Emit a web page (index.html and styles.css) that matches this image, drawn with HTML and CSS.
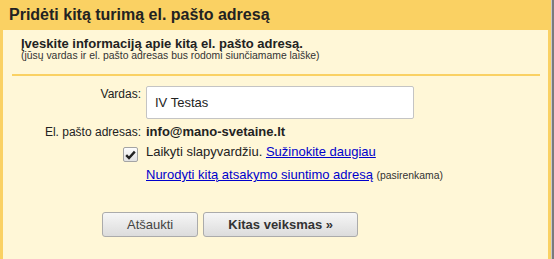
FILE: index.html
```html
<!DOCTYPE html>
<html>

	<head>

		<meta charset="UTF-8">
		<link rel="stylesheet" href="styles.css">
		<title>Pridėti kitą turimą el. pašto adresą</title>

	</head>

	<body>

		<div class="page">
			<div class="dialog">
				<h1 class="title">Pridėti kitą turimą el. pašto adresą</h1>
				<div class="box">
					<div class="intro">
						<p class="intro-title">Įveskite informaciją apie kitą el. pašto adresą.</p>
						<p class="intro-note">(jūsų vardas ir el. pašto adresas bus rodomi siunčiamame laiške)</p>
					</div>
					<div class="separator"></div>

					<div class="row row-name">
						<label class="row-label" for="name">Vardas:</label>
						<input class="input-name" id="name" value="IV Testas">
					</div>
					<div class="row row-email">
						<span class="row-label">El. pašto adresas:</span>
						<span class="email">info@mano-svetaine.lt</span>
					</div>
					<div class="row row-alias">
						<span class="checkbox">
							<svg width="11" height="10" viewBox="0 0 11 10">
								<path d="M1.2 5.2 L4 8 L9.8 1.6" fill="none" stroke="#222" stroke-width="2.4"/>
							</svg>
						</span>
						<span class="row-text">Laikyti slapyvardžiu. <a class="link" href="#">Sužinokite daugiau</a></span>
					</div>
					<div class="row row-reply">
						<span></span>
						<span class="row-text"><a class="link" href="#">Nurodyti kitą atsakymo siuntimo adresą</a> <small class="optional">(pasirenkama)</small></span>
					</div>

					<div class="buttons">
						<button class="btn btn-cancel">Atšaukti</button>
						<button class="btn btn-next">Kitas veiksmas »</button>
					</div>
				</div>
			</div>
			<div class="edge"></div>
		</div>

	</body>
</html>
```

FILE: styles.css
```css
		body {
			margin: 0;
			font-family: 'Liberation Sans', Arial, sans-serif;
			color: #222;
			background: #fff;
		}
		.page {
			display: flex;
		}
		.dialog {
			width: 551px;
			box-sizing: border-box;
			border-left: 3px solid #fad163;
			border-right: 3px solid #fad163;
			background: #fad163;
		}
		.title {
			margin: 0;
			padding-left: 6px;
			height: 30px;
			font-size: 16px;
			line-height: 30px;
			font-weight: bold;
			color: #222;
		}
		.box {
			background: #fff7d7;
			padding: 6px 8px 23px 9px;
		}
		.intro {
			padding: 0 9px;
		}
		.intro-title {
			margin: 0;
			font-size: 13px;
			line-height: 15px;
			font-weight: bold;
		}
		.intro-note {
			margin: -1px 0 0;
			font-size: 10.4px;
			line-height: 12px;
			color: #333;
		}
		.separator {
			height: 2px;
			margin-top: 12px;
			background: #fad163;
		}
		.row {
			display: grid;
			grid-template-columns: 129px 1fr;
			column-gap: 5px;
			align-items: start;
		}
		.row-name {
			margin-top: 10px;
		}
		.row-email,
		.row-alias,
		.row-reply {
			margin-top: 6px;
		}
		.row-label {
			text-align: right;
			font-size: 12px;
			line-height: 14px;
			color: #222;
		}
		.row-name .row-label {
			padding-top: 1px;
		}
		.input-name {
			width: 268px;
			height: 33px;
			box-sizing: border-box;
			margin: 0;
			padding: 0 8px;
			border: 1px solid #c4c4c4;
			border-radius: 2px;
			background: #fff;
			font-family: 'Liberation Sans', Arial, sans-serif;
			font-size: 13px;
			color: #222;
		}
		.email {
			font-size: 13px;
			line-height: 14px;
			font-weight: bold;
		}
		.row-text {
			font-size: 13px;
			line-height: 14px;
		}
		.checkbox {
			justify-self: end;
			margin: 2px 3px 0 0;
			width: 15px;
			height: 15px;
			box-sizing: border-box;
			border: 1px solid #a4a4a4;
			border-radius: 2px;
			background: linear-gradient(#fdfdfd, #e2e2e2);
			display: flex;
			align-items: center;
			justify-content: center;
		}
		.link {
			color: #0000cc;
			text-decoration: underline;
		}
		.optional {
			font-size: 10.4px;
			color: #333;
		}
		.buttons {
			display: flex;
			gap: 5px;
			margin-top: 29px;
			padding-left: 90px;
		}
		.btn {
			height: 25px;
			box-sizing: border-box;
			padding: 0 24px;
			border: 1px solid #ababab;
			border-radius: 3px;
			background: linear-gradient(#f6f6f6, #dcdcdc);
			font-family: 'Liberation Sans', Arial, sans-serif;
			font-size: 13px;
			line-height: 23px;
		}
		.btn-cancel {
			color: #444;
		}
		.btn-next {
			color: #333;
			font-weight: bold;
		}
		.edge {
			width: 2px;
			height: 259px;
			border-left: 1px solid #c9c9c9;
			background: #7b7b7b;
		}
```
